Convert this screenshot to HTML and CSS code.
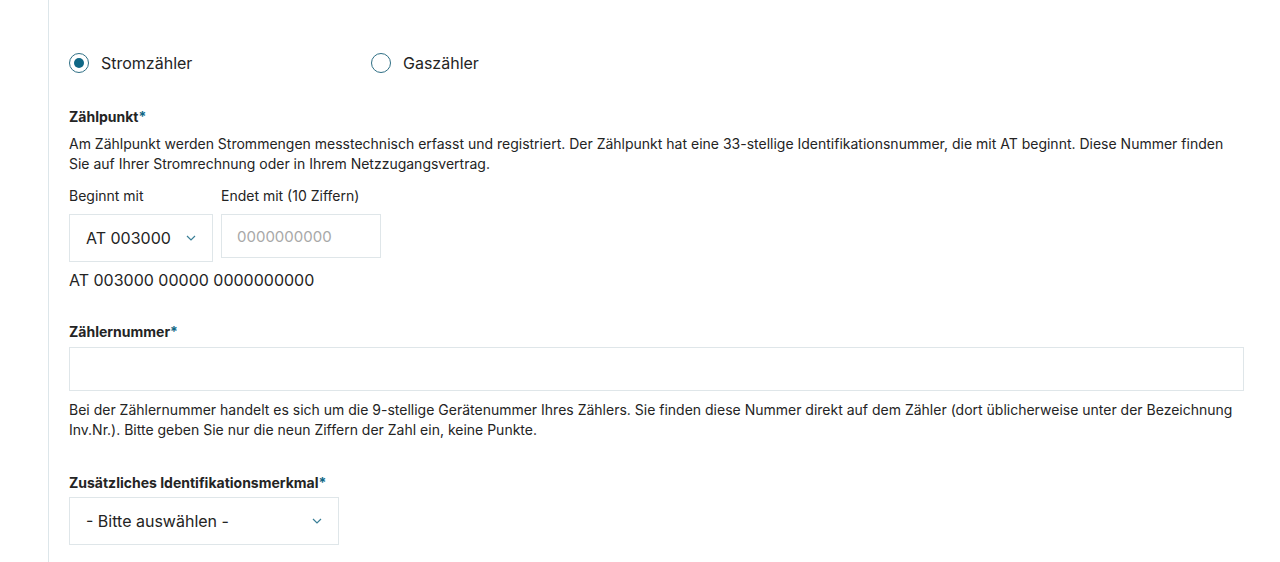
FILE: index.html
```html
<!DOCTYPE html>
<html lang="de">
<head>
<meta charset="utf-8">
<link rel="stylesheet" href="styles.css">
</head>
<body>
<div class="page">
  <main class="form">
    <div class="radios">
      <label class="radio"><span class="circle checked"></span><span>Stromzähler</span></label>
      <label class="radio"><span class="circle"></span><span>Gaszähler</span></label>
    </div>

    <section class="field first">
      <div class="label">Zählpunkt<span class="req">*</span></div>
      <p class="help">Am Zählpunkt werden Strommengen messtechnisch erfasst und registriert. Der Zählpunkt hat eine 33-stellige Identifikationsnummer, die mit AT beginnt. Diese Nummer finden Sie auf Ihrer Stromrechnung oder in Ihrem Netzzugangsvertrag.</p>
      <div class="split">
        <div class="col">
          <div class="sublabel">Beginnt mit</div>
          <div class="select small"><span>AT 003000</span><svg class="chev" viewBox="0 0 10 6" width="10" height="6"><path d="M1 1l4 4 4-4" fill="none" stroke="#3a7f97" stroke-width="1.2"/></svg></div>
        </div>
        <div class="col">
          <div class="sublabel">Endet mit (10 Ziffern)</div>
          <div class="input short"><span class="ph">0000000000</span></div>
        </div>
      </div>
      <div class="result">AT 003000 00000 0000000000</div>
    </section>

    <section class="field second">
      <div class="label">Zählernummer<span class="req">*</span></div>
      <div class="input wide"></div>
      <p class="help after">Bei der Zählernummer handelt es sich um die 9-stellige Gerätenummer Ihres Zählers. Sie finden diese Nummer direkt auf dem Zähler (dort üblicherweise unter der Bezeichnung Inv.Nr.). Bitte geben Sie nur die neun Ziffern der Zahl ein, keine Punkte.</p>
    </section>

    <section class="field third">
      <div class="label">Zusätzliches Identifikationsmerkmal<span class="req">*</span></div>
      <div class="select medium"><span>- Bitte auswählen -</span><svg class="chev" viewBox="0 0 10 6" width="10" height="6"><path d="M1 1l4 4 4-4" fill="none" stroke="#3a7f97" stroke-width="1.2"/></svg></div>
    </section>
  </main>
</div>
</body>
</html>
```

FILE: styles.css
```css
* { box-sizing: border-box; }
html, body { margin: 0; padding: 0; background: #fff; }
body {
  font-family: Inter, "Noto Sans", sans-serif;
  color: #242424;
  height: 562px;
  overflow: hidden;
}
.page {
  margin-left: 48px;
  border-left: 1px solid #dde6ea;
  min-height: 562px;
  padding: 51px 36px 0 20px;
}
.form { width: 1175px; }
.radios {
  display: flex;
  height: 24px;
  align-items: center;
}
.radio {
  display: flex;
  align-items: center;
  gap: 12px;
  font-size: 16px;
  width: 302px;
}
.circle {
  width: 20px;
  height: 20px;
  border-radius: 50%;
  border: 1px solid #2f6f85;
  display: flex;
  align-items: center;
  justify-content: center;
}
.circle.checked::after {
  content: "";
  width: 10px;
  height: 10px;
  border-radius: 50%;
  background: #0f6785;
}
.field.first { margin-top: 32px; }
.label {
  font-size: 14px;
  font-weight: 700;
  line-height: 20px;
}
.req { color: #0f6785; }
.help {
  font-size: 14px;
  line-height: 20px;
  margin: 7px 0 0;
}
.split {
  display: flex;
  gap: 8px;
  margin-top: 12px;
}
.sublabel {
  font-size: 14px;
  line-height: 20px;
  margin-bottom: 8px;
}
.select {
  height: 48px;
  border: 1px solid #dfe6e9;
  display: flex;
  align-items: center;
  justify-content: space-between;
  padding: 0 16px 0 16px;
  font-size: 16px;
}
.select.small { width: 144px; }
.select.medium { width: 270px; }
.input {
  height: 44px;
  border: 1px solid #dfe6e9;
  display: flex;
  align-items: center;
  padding: 0 15px;
  font-size: 16px;
}
.input.short { width: 160px; }
.input.wide { width: 1175px; }
.ph { color: #a8a8a8; font-size: 15px; }
.result {
  font-size: 16px;
  line-height: 24px;
  margin-top: 6px;
}
.field.second { margin-top: 30px; }
.field.second .input { margin-top: 5px; }
.help.after { margin-top: 9px; }
.field.third { margin-top: 33px; }
.field.third .select { margin-top: 4px; }
.chev { display: block; }
```
